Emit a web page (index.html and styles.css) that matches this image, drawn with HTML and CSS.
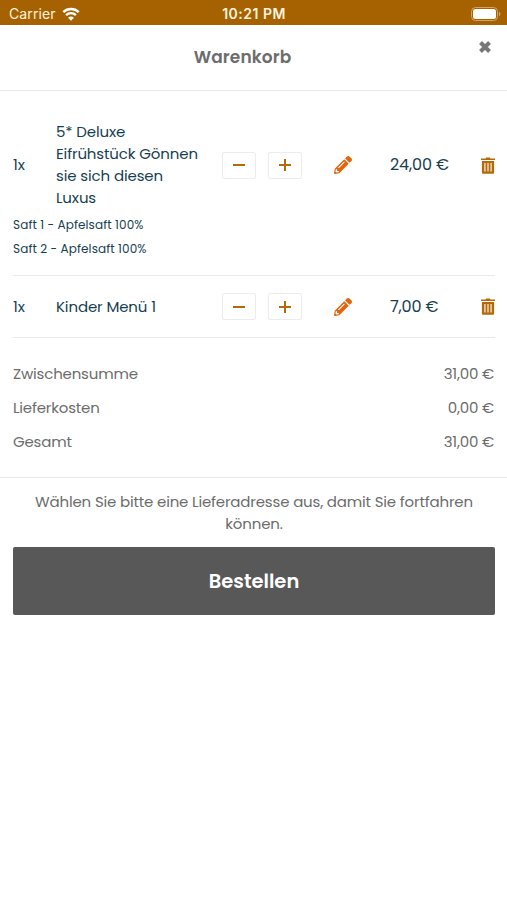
FILE: index.html
```html
<!DOCTYPE html>
<html lang="de">
<head>
    <meta charset="UTF-8">
    <meta name="viewport" content="width=device-width, initial-scale=1.0">
    <title>Warenkorb</title>
    <link rel="stylesheet" href="styles.css">
</head>
<body>
    <svg class="sprite" aria-hidden="true">
        <symbol id="pencil" viewBox="0 0 512 512">
            <path d="M498 142l-46 46c-5 5-12 5-17 0L324 77c-5-5-5-12 0-17l46-46c19-19 49-19 68 0l60 60c19 19 19 49 0 68zm-214-42L22 362 0 484c-3 16 12 30 28 28l122-22 262-262c5-5 5-12 0-17L301 100c-5-5-12-5-17 0zM124 340c-5-6-5-14 0-20l154-154c6-5 14-5 20 0s5 14 0 20L144 340c-6 5-14 5-20 0zm-36 84h48v36l-65 12-31-31 12-65h36v48z"/>
        </symbol>
        <symbol id="trash" viewBox="0 0 14 17">
            <path fill-rule="evenodd" d="M0 1.5h4.6L5.2.4h3.6l.6 1.1H14v1.4H0zM.9 4h12.2v11.4c0 .8-.5 1.3-1.3 1.3H2.2c-.8 0-1.3-.5-1.3-1.3zM3.4 6v8.6h1.1V6zM6.45 6v8.6h1.1V6zM9.5 6v8.6h1.1V6z"/>
        </symbol>
    </svg>
    <div class="statusbar">
        <div class="carrier">
            <span>Carrier</span>
            <svg class="wifi" viewBox="0 0 18 14">
                <path d="M1.3 5.2a11 11 0 0 1 15.4 0" />
                <path d="M4.1 8.1a7 7 0 0 1 9.8 0" />
                <path class="dot" d="M9 13.8l-2.9-3a4.2 4.2 0 0 1 5.8 0z" />
            </svg>
        </div>
        <span class="time">10:21 PM</span>
        <svg class="battery" viewBox="0 0 30 14">
            <rect class="shell" x=".5" y=".5" width="26" height="13" rx="4"/>
            <rect class="charge" x="2" y="2" width="23" height="10" rx="2.5"/>
            <path class="tip" d="M28 4.8c2 .8 2 3.6 0 4.4z"/>
        </svg>
    </div>
    <div class="header">
        <h1>Warenkorb</h1>
        <svg class="close" viewBox="0 0 14 14">
            <path d="M2.5 2.5l9 9M11.5 2.5l-9 9"/>
        </svg>
    </div>
    <div class="items">
        <div class="item">
            <div class="row">
                <span>1x</span>
                <span class="name">5* Deluxe<br>Eifrühstück Gönnen<br>sie sich diesen<br>Luxus</span>
                <div class="quantity">
                    <button aria-label="Weniger"><svg viewBox="0 0 12 12"><path d="M0 6h12"/></svg></button>
                    <button aria-label="Mehr"><svg viewBox="0 0 12 12"><path d="M0 6h12M6 0v12"/></svg></button>
                </div>
                <svg class="edit"><use href="#pencil"/></svg>
                <span class="price">24,00 €</span>
                <svg class="remove"><use href="#trash"/></svg>
            </div>
            <ul class="extras">
                <li>Saft 1 - Apfelsaft 100%</li>
                <li>Saft 2 - Apfelsaft 100%</li>
            </ul>
        </div>
        <div class="item">
            <div class="row">
                <span>1x</span>
                <span class="name">Kinder Menü 1</span>
                <div class="quantity">
                    <button aria-label="Weniger"><svg viewBox="0 0 12 12"><path d="M0 6h12"/></svg></button>
                    <button aria-label="Mehr"><svg viewBox="0 0 12 12"><path d="M0 6h12M6 0v12"/></svg></button>
                </div>
                <svg class="edit"><use href="#pencil"/></svg>
                <span class="price">7,00 €</span>
                <svg class="remove"><use href="#trash"/></svg>
            </div>
        </div>
    </div>
    <div class="totals">
        <div><span>Zwischensumme</span><span>31,00 €</span></div>
        <div><span>Lieferkosten</span><span>0,00 €</span></div>
        <div><span>Gesamt</span><span>31,00 €</span></div>
    </div>
    <div class="checkout">
        <p>Wählen Sie bitte eine Lieferadresse aus, damit Sie fortfahren<br>können.</p>
        <button class="order">Bestellen</button>
    </div>
</body>
</html>
```
FILE: styles.css
```css
* {
    box-sizing: border-box;
}
body {
    margin: 0;
    background-color: #fff;
    color: #6c6c6c;
    font-family: Poppins, Inter, sans-serif;
    font-size: 15px;
    line-height: 22px;
}
button {
    font-family: inherit;
    cursor: pointer;
}
.sprite {
    display: none;
}
.statusbar {
    display: grid;
    grid-template-columns: 1fr auto 1fr;
    align-items: center;
    height: 25px;
    padding: 2px 6px 0 9px;
    background-color: #a66200;
    color: #fff3df;
    font-family: Inter, sans-serif;
    font-size: 14px;
}
.carrier {
    display: flex;
    align-items: center;
    gap: 6px;
    letter-spacing: 0.1px;
}
.wifi {
    width: 18px;
    height: 14px;
    fill: none;
    stroke: #fff;
    stroke-width: 2.4;
}
.wifi .dot {
    fill: #fff;
    stroke: none;
}
.time {
    margin-right: 2px;
    font-weight: 600;
    letter-spacing: 0.5px;
}
.battery {
    justify-self: end;
    width: 30px;
    height: 14px;
    fill: #fff;
}
.battery .shell {
    fill: none;
    stroke: #d3a468;
}
.battery .tip {
    fill: #d3a468;
}
.header {
    position: relative;
    height: 66px;
    padding: 21px 22px 0 0;
    border-bottom: 1px solid #e9e9e9;
}
.header h1 {
    margin: 0;
    text-align: center;
    font-size: 17px;
    font-weight: 600;
    line-height: 22px;
    letter-spacing: 0.1px;
}
.close {
    position: absolute;
    top: 15px;
    right: 15px;
    width: 14px;
    height: 14px;
    stroke: #777;
    stroke-width: 4;
}
.items {
    padding: 14px 12px 0 13px;
    color: #164050;
}
.item {
    padding: 16px 0 14px;
    border-bottom: 1px solid #e9e9e9;
}
.item + .item {
    padding: 17px 0;
}
.row {
    display: grid;
    grid-template-columns: 43px 166px 112px 56px 1fr 14px;
    align-items: center;
}
.name {
    letter-spacing: -0.13px;
}
.quantity {
    display: flex;
    gap: 12px;
}
.quantity button {
    display: flex;
    align-items: center;
    justify-content: center;
    width: 34px;
    height: 27px;
    padding: 0;
    background-color: #fff;
    border: 1px solid #ececec;
    border-radius: 2px;
}
.quantity svg {
    width: 12px;
    height: 12px;
    stroke: #b4690a;
    stroke-width: 2;
}
.edit {
    width: 18px;
    height: 18px;
    fill: #e0650c;
}
.price {
    font-size: 16px;
    letter-spacing: -0.15px;
}
.remove {
    width: 14px;
    height: 17px;
    fill: #b4690a;
}
.extras {
    list-style-type: none;
    margin: 4px 0 0;
    padding: 0;
    font-size: 12px;
    line-height: 24px;
    letter-spacing: 0.11px;
}
.totals {
    padding: 19px 13px 18px;
    border-bottom: 1px solid #e9e9e9;
    line-height: 34px;
    letter-spacing: -0.18px;
}
.totals div {
    display: flex;
    justify-content: space-between;
}
.checkout {
    padding: 13px 12px 0 13px;
}
.checkout p {
    margin: 0 0 12px;
    text-align: center;
    letter-spacing: -0.17px;
}
.order {
    display: block;
    width: 100%;
    height: 68px;
    background-color: #585858;
    color: #fff;
    border: none;
    border-radius: 2px;
    font-size: 19.5px;
    font-weight: 600;
}
```
